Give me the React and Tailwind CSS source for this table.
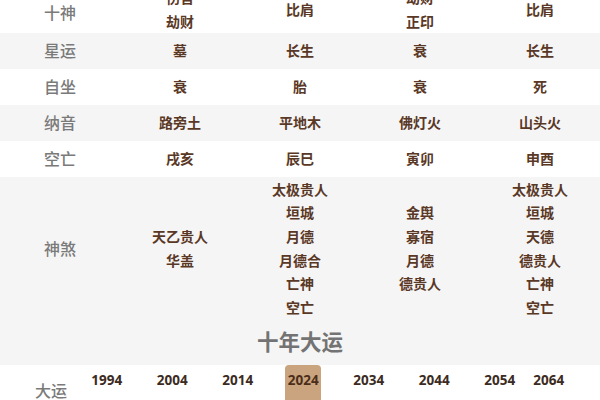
const font = { fontFamily: '"Noto Sans", "Noto Sans CJK SC", sans-serif' };

const rows = [
  { label: "星运", cells: ["墓", "长生", "衰", "长生"], bg: "bg-[#f5f5f5]" },
  { label: "自坐", cells: ["衰", "胎", "衰", "死"], bg: "bg-white" },
  { label: "纳音", cells: ["路旁土", "平地木", "佛灯火", "山头火"], bg: "bg-[#f5f5f5]" },
  { label: "空亡", cells: ["戌亥", "辰巳", "寅卯", "申酉"], bg: "bg-white" },
];

const shensha = [
  ["天乙贵人", "华盖"],
  ["太极贵人", "垣城", "月德", "月德合", "亡神", "空亡"],
  ["金舆", "寡宿", "月德", "德贵人"],
  ["太极贵人", "垣城", "天德", "德贵人", "亡神", "空亡"],
];

const years = ["1994", "2004", "2014", "2024", "2034", "2044", "2054"];

function Label({ children, extra = "" }) {
  return <div className={`text-center text-[16px] font-medium text-[#7a7a7a] ${extra}`}>{children}</div>;
}

function Lines({ items, lh = "leading-[24px]" }) {
  return (
    <div className={`flex flex-col items-center text-[14px] font-bold text-[#5a3826] ${lh}`}>
      {items.map((t, i) => (
        <div key={i}>{t}</div>
      ))}
    </div>
  );
}

export default function App() {
  return (
    <div className="w-[600px] h-[400px] overflow-hidden bg-[#f5f5f5]" style={font}>
      {/* 十神 */}
      <div className="-mt-[14px] h-[47px] grid grid-cols-5 items-center bg-white">
        <Label extra="pt-[6px]">十神</Label>
        <Lines items={["伤官", "劫财"]} />
        <Lines items={["比肩"]} />
        <Lines items={["劫财", "正印"]} />
        <Lines items={["比肩"]} />
      </div>

      {rows.map((r) => (
        <div key={r.label} className={`h-[36px] grid grid-cols-5 items-center ${r.bg}`}>
          <Label>{r.label}</Label>
          {r.cells.map((c, i) => (
            <Lines key={i} items={[c]} />
          ))}
        </div>
      ))}

      {/* 神煞 */}
      <div className="h-[143px] grid grid-cols-5 items-center">
        <Label>神煞</Label>
        {shensha.map((s, i) => (
          <Lines key={i} items={s} lh="leading-[23.6px]" />
        ))}
      </div>

      <div className="h-[45px] flex items-center justify-center text-[21.5px] font-bold text-[#737373]">
        十年大运
      </div>

      <div className="h-[50px] flex bg-white">
        <div className="w-[74px] pt-[15px] pl-[35px] text-[16px] font-medium leading-[22px] text-[#7a7a7a]">大运</div>
        {years.map((y) => (
          <div key={y} className="w-[65.5px] flex justify-center">
            <div
              className={`w-[36px] h-full flex justify-center pt-[5px] text-[13.5px] leading-[20px] font-bold rounded-t-[4px] ${
                y === "2024" ? "bg-[#c9a47f] text-[#4b2e1a]" : "text-[#3b2b22]"
              }`}
            >
              {y}
            </div>
          </div>
        ))}
        <div className="w-[32.5px] flex justify-center pt-[5px] text-[13.5px] leading-[20px] font-bold text-[#3b2b22]">
          2064
        </div>
      </div>
    </div>
  );
}
